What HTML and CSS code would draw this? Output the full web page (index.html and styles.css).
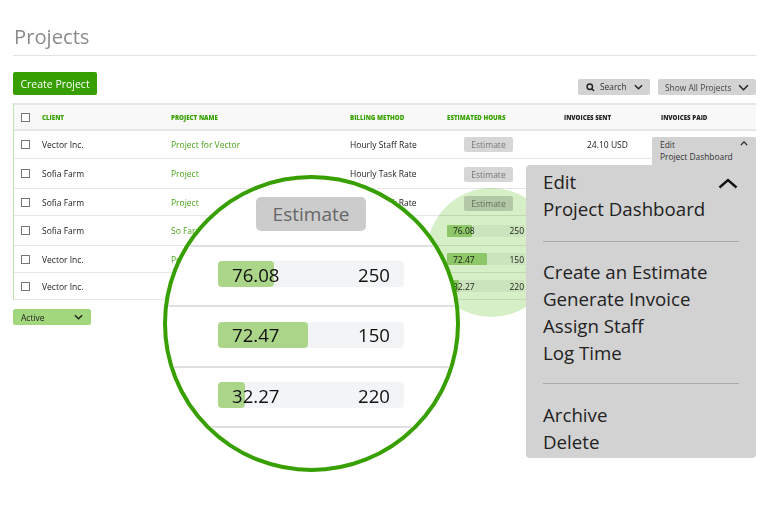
FILE: index.html
```html
<!DOCTYPE html>
<html lang="en">
<head>
<meta charset="UTF-8">
<meta name="viewport" content="width=device-width, initial-scale=1.0">
<title>Projects</title>
<link rel="stylesheet" href="styles.css">
</head>
<body>
<div class="page">
  <h1 class="page-title">Projects</h1>

  <div class="toolbar">
    <button class="btn-create" type="button">Create Project</button>
    <div class="toolbar-right">
      <button class="btn-filter btn-search" type="button">
        <svg class="icon-search" viewBox="0 0 10 10"><circle cx="4.2" cy="4.2" r="3"/><line x1="6.4" y1="6.4" x2="9" y2="9"/></svg>
        <span>Search</span>
        <svg class="chevron" viewBox="0 0 10 6"><polyline points="1,1 5,5 9,1"/></svg>
      </button>
      <button class="btn-filter btn-show" type="button">
        <span>Show All Projects</span>
        <svg class="chevron chevron-wide" viewBox="0 0 10 6"><polyline points="1,1 5,5 9,1"/></svg>
      </button>
    </div>
  </div>

  <div class="table">
    <div class="row row-head">
      <span class="check"></span>
      <span class="head-green">Client</span>
      <span class="head-green">Project Name</span>
      <span class="head-green">Billing Method</span>
      <span class="head-green">Estimated Hours</span>
      <span>Invoices Sent</span>
      <span>Invoices Paid</span>
    </div>
    <div class="row row-first">
      <span class="check"></span>
      <span>Vector Inc.</span>
      <span class="project">Project for Vector</span>
      <span>Hourly Staff Rate</span>
      <span><button class="btn-estimate" type="button">Estimate</button></span>
      <span class="sent">24.10 USD</span>
      <span></span>
    </div>
    <div class="row row-tall">
      <span class="check"></span>
      <span>Sofia Farm</span>
      <span class="project">Project</span>
      <span>Hourly Task Rate</span>
      <span><button class="btn-estimate btn-estimate-low" type="button">Estimate</button></span>
      <span></span>
      <span></span>
    </div>
    <div class="row">
      <span class="check"></span>
      <span>Sofia Farm</span>
      <span class="project">Project</span>
      <span>Hourly Task Rate</span>
      <span><button class="btn-estimate btn-estimate-low" type="button">Estimate</button></span>
      <span></span>
      <span></span>
    </div>
    <div class="row row-tall">
      <span class="check"></span>
      <span>Sofia Farm</span>
      <span class="project">So Farm</span>
      <span></span>
      <span class="bar"><i class="bar-fill" style="width: 32%"></i><b>76.08</b><b>250</b></span>
      <span></span>
      <span></span>
    </div>
    <div class="row">
      <span class="check"></span>
      <span>Vector Inc.</span>
      <span class="project">Project</span>
      <span></span>
      <span class="bar"><i class="bar-fill" style="width: 51%"></i><b>72.47</b><b>150</b></span>
      <span></span>
      <span></span>
    </div>
    <div class="row">
      <span class="check"></span>
      <span>Vector Inc.</span>
      <span class="project">Project</span>
      <span></span>
      <span class="bar"><i class="bar-fill" style="width: 15%"></i><b>32.27</b><b>220</b></span>
      <span></span>
      <span></span>
    </div>
  </div>

  <button class="btn-active" type="button">
    <span>Active</span>
    <svg class="chevron" viewBox="0 0 10 6"><polyline points="1,1 5,5 9,1"/></svg>
  </button>

  <!-- things lying on top of the table -->
  <div class="spot"></div>

  <div class="menu-small">
    <div>Edit</div>
    <div>Project Dashboard</div>
    <svg class="chevron-small" viewBox="0 0 10 6"><polyline points="1,5 5,1 9,5"/></svg>
  </div>

  <div class="lens">
    <div class="lens-row lens-row-top">
      <button class="lens-estimate" type="button">Estimate</button>
    </div>
    <div class="lens-row">
      <div class="lens-bar"><i class="lens-fill" style="width: 30%"></i><b>76.08</b><b>250</b></div>
    </div>
    <div class="lens-row">
      <div class="lens-bar"><i class="lens-fill" style="width: 48.5%"></i><b>72.47</b><b>150</b></div>
    </div>
    <div class="lens-row">
      <div class="lens-bar"><i class="lens-fill" style="width: 14.5%"></i><b>32.27</b><b>220</b></div>
    </div>
  </div>

  <div class="menu-big">
    <svg class="chevron-big" viewBox="0 0 20 11"><polyline points="1.5,9.5 10,2 18.5,9.5"/></svg>
    <div class="menu-group">
      <div>Edit</div>
      <div>Project Dashboard</div>
    </div>
    <div class="menu-group">
      <div>Create an Estimate</div>
      <div>Generate Invoice</div>
      <div>Assign Staff</div>
      <div>Log Time</div>
    </div>
    <div class="menu-group">
      <div>Archive</div>
      <div>Delete</div>
    </div>
  </div>
</div>
</body>
</html>
```

FILE: styles.css
```css
* {
  box-sizing: border-box;
}
body {
  margin: 0;
  background-color: #fff;
  font-family: "Open Sans", sans-serif;
  color: #222;
}
button {
  font-family: inherit;
  border: none;
  padding: 0;
}
svg {
  fill: none;
  stroke: currentColor;
}
.page {
  position: relative;
  width: 768px;
  height: 508px;
  padding: 20px 12px 0 13px;
  overflow: hidden;
}
.page-title {
  margin: 0 0 16px;
  height: 36px;
  padding-left: 1px;
  border-bottom: 1px solid #e2e2e2;
  font-size: 20.2px;
  line-height: 33px;
  font-weight: 400;
  color: #8b8b8b;
}
.toolbar {
  display: flex;
  justify-content: space-between;
  align-items: flex-end;
  height: 23px;
  margin-bottom: 8px;
}
.btn-create {
  width: 84px;
  height: 23px;
  border-radius: 2px;
  background-color: #37a000;
  color: #fff;
  font-size: 10.5px;
}
.toolbar-right {
  display: flex;
  gap: 8px;
}
.btn-filter {
  display: flex;
  align-items: center;
  height: 16px;
  border-radius: 2px;
  background-color: #d3d3d3;
  color: #444;
  font-size: 8.4px;
}
.btn-search {
  width: 72px;
  padding-left: 8px;
  color: #333;
}
.btn-search span {
  margin: 0 7px 2px 5px;
}
.btn-show {
  width: 98px;
  padding-left: 7px;
}
.btn-show span {
  margin-right: 7px;
}
.icon-search {
  width: 9px;
  height: 9px;
  stroke-width: 1.6;
  color: #222;
}
.chevron {
  width: 9px;
  height: 6px;
  stroke-width: 1.6;
  color: #222;
}
.chevron-wide {
  width: 11px;
  height: 7px;
  stroke-width: 1.4;
}
.table {
  border-left: 1px solid #c4e6ae;
}
.row {
  display: grid;
  grid-template-columns: 28px 129px 179px 97px 117px 97px 1fr;
  align-items: center;
  height: 27px;
  border-bottom: 1px solid #e6e6e6;
  font-size: 8.5px;
  color: #222;
}
.row-first {
  height: 28px;
}
.row-tall {
  height: 30px;
}
.row-head {
  height: 28px;
  border-top: 2px solid #e6e6e6;
  border-bottom: 2px solid #e6e6e6;
  background-color: #f8f8f8;
  font-size: 6.2px;
  font-weight: 800;
  text-transform: uppercase;
}
.head-green {
  color: #37a000;
}
.check {
  width: 9px;
  height: 9px;
  margin-left: 7px;
  border: 1px solid #777;
  background-color: #fff;
}
.project {
  color: #4aa51c;
}
.btn-estimate {
  display: block;
  width: 49px;
  height: 15px;
  margin-left: 17px;
  border-radius: 2px;
  background-color: #d6d6d6;
  color: #777;
  font-size: 8.5px;
}
.btn-estimate-low {
  margin-top: 2px;
}
.sent {
  padding-left: 23px;
}
.bar {
  position: relative;
  display: flex;
  justify-content: space-between;
  align-items: center;
  width: 78px;
  height: 12px;
  padding: 0 1px 0 6px;
  border-radius: 1px;
  background-color: #f3f4f4;
  font-size: 8.5px;
}
.bar b {
  position: relative;
  font-weight: 400;
}
.bar-fill {
  position: absolute;
  left: 0;
  top: 0;
  bottom: 0;
  border-radius: 1px;
  background-color: #a9d585;
}
.btn-active {
  display: flex;
  justify-content: space-between;
  align-items: center;
  width: 78px;
  height: 16px;
  margin-top: 9px;
  padding: 0 8px;
  border-radius: 2px;
  background-color: #a3d77e;
  color: #222;
  font-size: 8.5px;
}
.spot {
  position: absolute;
  left: 427px;
  top: 188px;
  width: 129px;
  height: 129px;
  border-radius: 50%;
  background-color: #d6efc6;
  mix-blend-mode: multiply;
}
.menu-small {
  position: absolute;
  left: 652px;
  top: 137px;
  width: 104px;
  height: 40px;
  padding: 2px 8px;
  border-radius: 2px;
  background-color: #d2d2d2;
  font-size: 8.4px;
  line-height: 12px;
  color: #333;
}
.chevron-small {
  position: absolute;
  right: 8px;
  top: 4px;
  width: 8px;
  height: 5px;
  stroke-width: 1.6;
  color: #222;
}
.lens {
  position: absolute;
  left: 163px;
  top: 175px;
  display: flex;
  flex-direction: column;
  width: 297px;
  height: 297px;
  border: 4px solid #37a000;
  border-radius: 50%;
  background-color: #fff;
  overflow: hidden;
}
.lens-row {
  flex: none;
  height: 60.5px;
  padding: 14.5px 0 0 51px;
  border-bottom: 2px solid #dfdfe3;
}
.lens-row-top {
  height: 67.5px;
  padding: 18px 0 0 89px;
}
.lens-estimate {
  display: block;
  width: 110px;
  height: 34px;
  border-radius: 5px;
  background-color: #cccccc;
  color: #666;
  font-size: 19px;
}
.lens-bar {
  position: relative;
  display: flex;
  justify-content: space-between;
  align-items: center;
  width: 186px;
  height: 26px;
  padding: 0 14px;
  border-radius: 4px;
  background-color: #f3f4f5;
  font-size: 18.6px;
}
.lens-bar b {
  position: relative;
  font-weight: 400;
  color: #111;
}
.lens-fill {
  position: absolute;
  left: 0;
  top: 0;
  bottom: 0;
  border-radius: 4px;
  background-color: #abd68a;
}
.menu-big {
  position: absolute;
  left: 526px;
  top: 165px;
  width: 230px;
  height: 293px;
  padding: 3px 17px 0;
  border-radius: 4px;
  background-color: #d2d2d2;
  font-size: 18.7px;
  line-height: 27px;
  color: #222;
}
.menu-group {
  padding-bottom: 19px;
  margin-bottom: 16px;
  border-bottom: 1px solid #a9a9a9;
}
.menu-group + .menu-group {
  padding-bottom: 17px;
  margin-bottom: 17px;
}
.menu-group:last-child {
  border-bottom: none;
  margin-bottom: 0;
  padding-bottom: 0;
}
.chevron-big {
  position: absolute;
  right: 18px;
  top: 13px;
  width: 20px;
  height: 11px;
  stroke-width: 2.4;
  color: #111;
}
```
